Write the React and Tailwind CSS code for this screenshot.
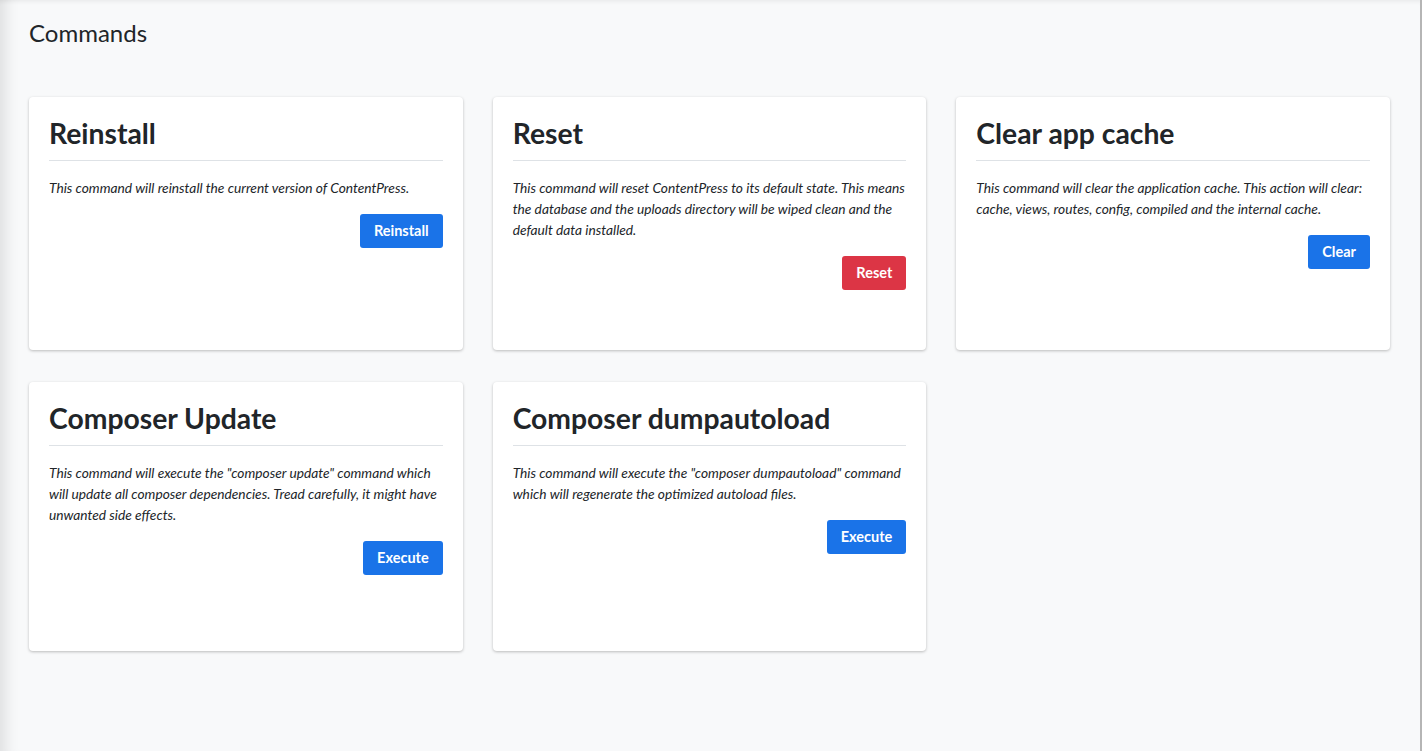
import React from "react";

const commands = [
  {
    title: "Reinstall",
    text: "This command will reinstall the current version of ContentPress.",
    button: "Reinstall",
    danger: false,
  },
  {
    title: "Reset",
    text: "This command will reset ContentPress to its default state. This means the database and the uploads directory will be wiped clean and the default data installed.",
    button: "Reset",
    danger: true,
  },
  {
    title: "Clear app cache",
    text: "This command will clear the application cache. This action will clear: cache, views, routes, config, compiled and the internal cache.",
    button: "Clear",
    danger: false,
  },
  {
    title: "Composer Update",
    text: 'This command will execute the "composer update" command which will update all composer dependencies. Tread carefully, it might have unwanted side effects.',
    button: "Execute",
    danger: false,
  },
  {
    title: "Composer dumpautoload",
    text: 'This command will execute the "composer dumpautoload" command which will regenerate the optimized autoload files.',
    button: "Execute",
    danger: false,
  },
];

function CommandCard({ command, height }) {
  return (
    <div className={`bg-white rounded-[4px] shadow-[0_1px_3px_rgba(0,0,0,0.25)] px-5 pt-5 ${height}`}>
      <h2 className="text-[28.3px] leading-[32px] font-bold text-[#212529] pb-[11px] border-b border-[#dee2e6]">
        {command.title}
      </h2>
      <p className="mt-4 text-[13.75px] leading-[21px] italic text-[#212529]">{command.text}</p>
      <div className="flex justify-end mt-4">
        <button
          className={`h-[34px] px-[14px] rounded-[3px] text-white text-[14.5px] font-bold ${
            command.danger ? "bg-[#dc3545]" : "bg-[#1a73e8]"
          }`}
        >
          {command.button}
        </button>
      </div>
    </div>
  );
}

export default function App() {
  return (
    <div
      className="min-h-[751px] bg-[#f8f9fa] border-r-2 border-[#b5b5b5] shadow-[inset_18px_0_14px_-12px_rgba(0,0,0,0.1),inset_0_5px_5px_-4px_rgba(0,0,0,0.08)]"
      style={{ fontFamily: "Lato, 'Noto Sans', sans-serif" }}
    >
      <div className="pl-[29px] pr-[30px] pt-5">
        <h1 className="text-[24px] leading-[26px] text-[#212529]">Commands</h1>
        <div className="grid grid-cols-3 gap-x-[30px] gap-y-[32px] mt-[51px]">
          {commands.map((c, i) => (
            <CommandCard key={i} command={c} height={i < 3 ? "h-[253px]" : "h-[269px]"} />
          ))}
        </div>
      </div>
    </div>
  );
}
